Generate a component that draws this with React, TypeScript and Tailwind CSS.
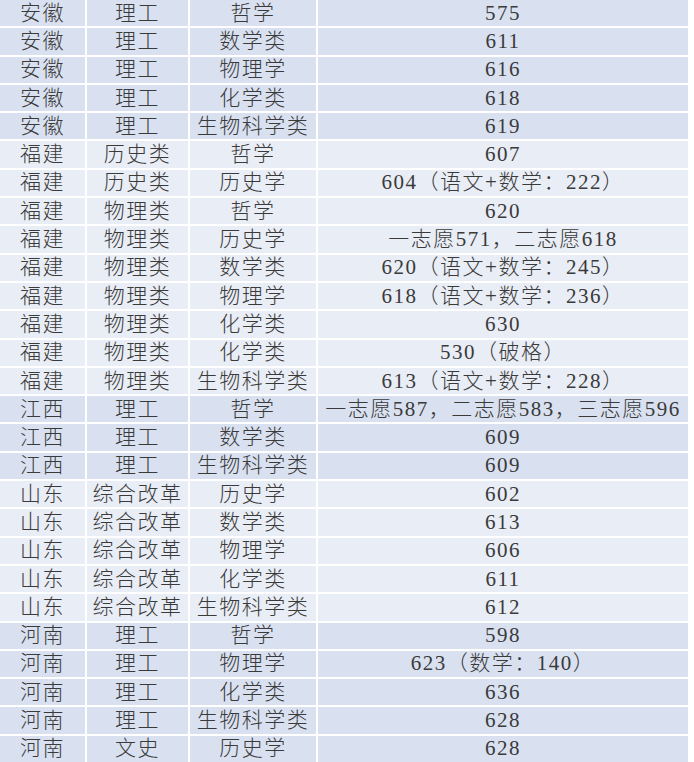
const ROWS: [string, string, string, string][] = [
  ["安徽", "理工", "哲学", "575"],
  ["安徽", "理工", "数学类", "611"],
  ["安徽", "理工", "物理学", "616"],
  ["安徽", "理工", "化学类", "618"],
  ["安徽", "理工", "生物科学类", "619"],
  ["福建", "历史类", "哲学", "607"],
  ["福建", "历史类", "历史学", "604（语文+数学：222）"],
  ["福建", "物理类", "哲学", "620"],
  ["福建", "物理类", "历史学", "一志愿571，二志愿618"],
  ["福建", "物理类", "数学类", "620（语文+数学：245）"],
  ["福建", "物理类", "物理学", "618（语文+数学：236）"],
  ["福建", "物理类", "化学类", "630"],
  ["福建", "物理类", "化学类", "530（破格）"],
  ["福建", "物理类", "生物科学类", "613（语文+数学：228）"],
  ["江西", "理工", "哲学", "一志愿587，二志愿583，三志愿596"],
  ["江西", "理工", "数学类", "609"],
  ["江西", "理工", "生物科学类", "609"],
  ["山东", "综合改革", "历史学", "602"],
  ["山东", "综合改革", "数学类", "613"],
  ["山东", "综合改革", "物理学", "606"],
  ["山东", "综合改革", "化学类", "611"],
  ["山东", "综合改革", "生物科学类", "612"],
  ["河南", "理工", "哲学", "598"],
  ["河南", "理工", "物理学", "623（数学：140）"],
  ["河南", "理工", "化学类", "636"],
  ["河南", "理工", "生物科学类", "628"],
  ["河南", "文史", "历史学", "628"],
];

// provinces whose rows get the darker blue fill
const BLUE = new Set(["安徽", "江西", "河南"]);

export default function App() {
  return (
    <div className="w-[694px] h-[762px] bg-white text-[#3a3a3a] text-[21px] font-light tracking-[1.5px] overflow-hidden font-['Liberation_Serif','Noto_Sans_CJK_SC',serif]">
      <div className="w-[688px] h-full flex flex-col gap-y-[2px]">
        {ROWS.map((r, i) => (
          <div key={i} className="flex-1 grid grid-cols-[85px_101px_126px_1fr] gap-x-[2px]">
            {r.map((c, j) => (
              <div
                key={j}
                className={`flex items-center justify-center whitespace-nowrap leading-none ${
                  BLUE.has(r[0]) ? "bg-[#d9e1f1]" : "bg-[#e9edf5]"
                }`}
              >
                {c}
              </div>
            ))}
          </div>
        ))}
      </div>
    </div>
  );
}
